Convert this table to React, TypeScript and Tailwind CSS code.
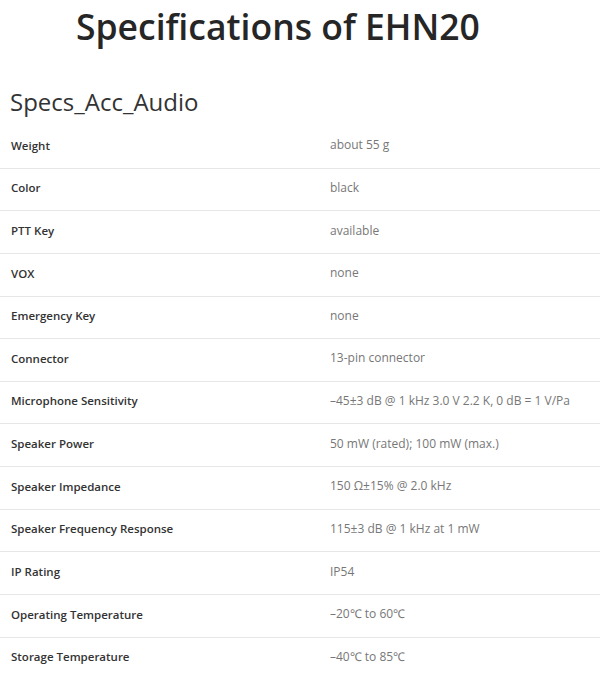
const specs: [string, string][] = [
  ["Weight", "about 55 g"],
  ["Color", "black"],
  ["PTT Key", "available"],
  ["VOX", "none"],
  ["Emergency Key", "none"],
  ["Connector", "13-pin connector"],
  ["Microphone Sensitivity", "–45±3 dB @ 1 kHz 3.0 V 2.2 K, 0 dB = 1 V/Pa"],
  ["Speaker Power", "50 mW (rated); 100 mW (max.)"],
  ["Speaker Impedance", "150 Ω±15% @ 2.0 kHz"],
  ["Speaker Frequency Response", "115±3 dB @ 1 kHz at 1 mW"],
  ["IP Rating", "IP54"],
  ["Operating Temperature", "–20℃ to 60℃"],
  ["Storage Temperature", "–40℃ to 85℃"],
];

export default function App() {
  return (
    <div className="w-[600px] h-[677px] overflow-hidden bg-white font-['Open_Sans',sans-serif]">
      <h1 className="pl-[76px] pt-[3px] text-[35.5px] leading-[46px] font-semibold text-[#262626]">
        Specifications of EHN20
      </h1>
      <h2 className="mt-[37px] pl-[10px] text-[24px] leading-[32px] text-[#333]">
        Specs_Acc_Audio
      </h2>
      <div className="mt-[8px]">
        {specs.map(([label, value]) => (
          <div
            key={label}
            className="flex h-[42.64px] items-center border-b border-[#e6e6e6] pb-[3px]"
          >
            <div className="w-[330px] pl-[11px] text-[11.5px] font-semibold text-[#333]">
              {label}
            </div>
            <div className="text-[12px] text-[#777]">{value}</div>
          </div>
        ))}
      </div>
    </div>
  );
}
